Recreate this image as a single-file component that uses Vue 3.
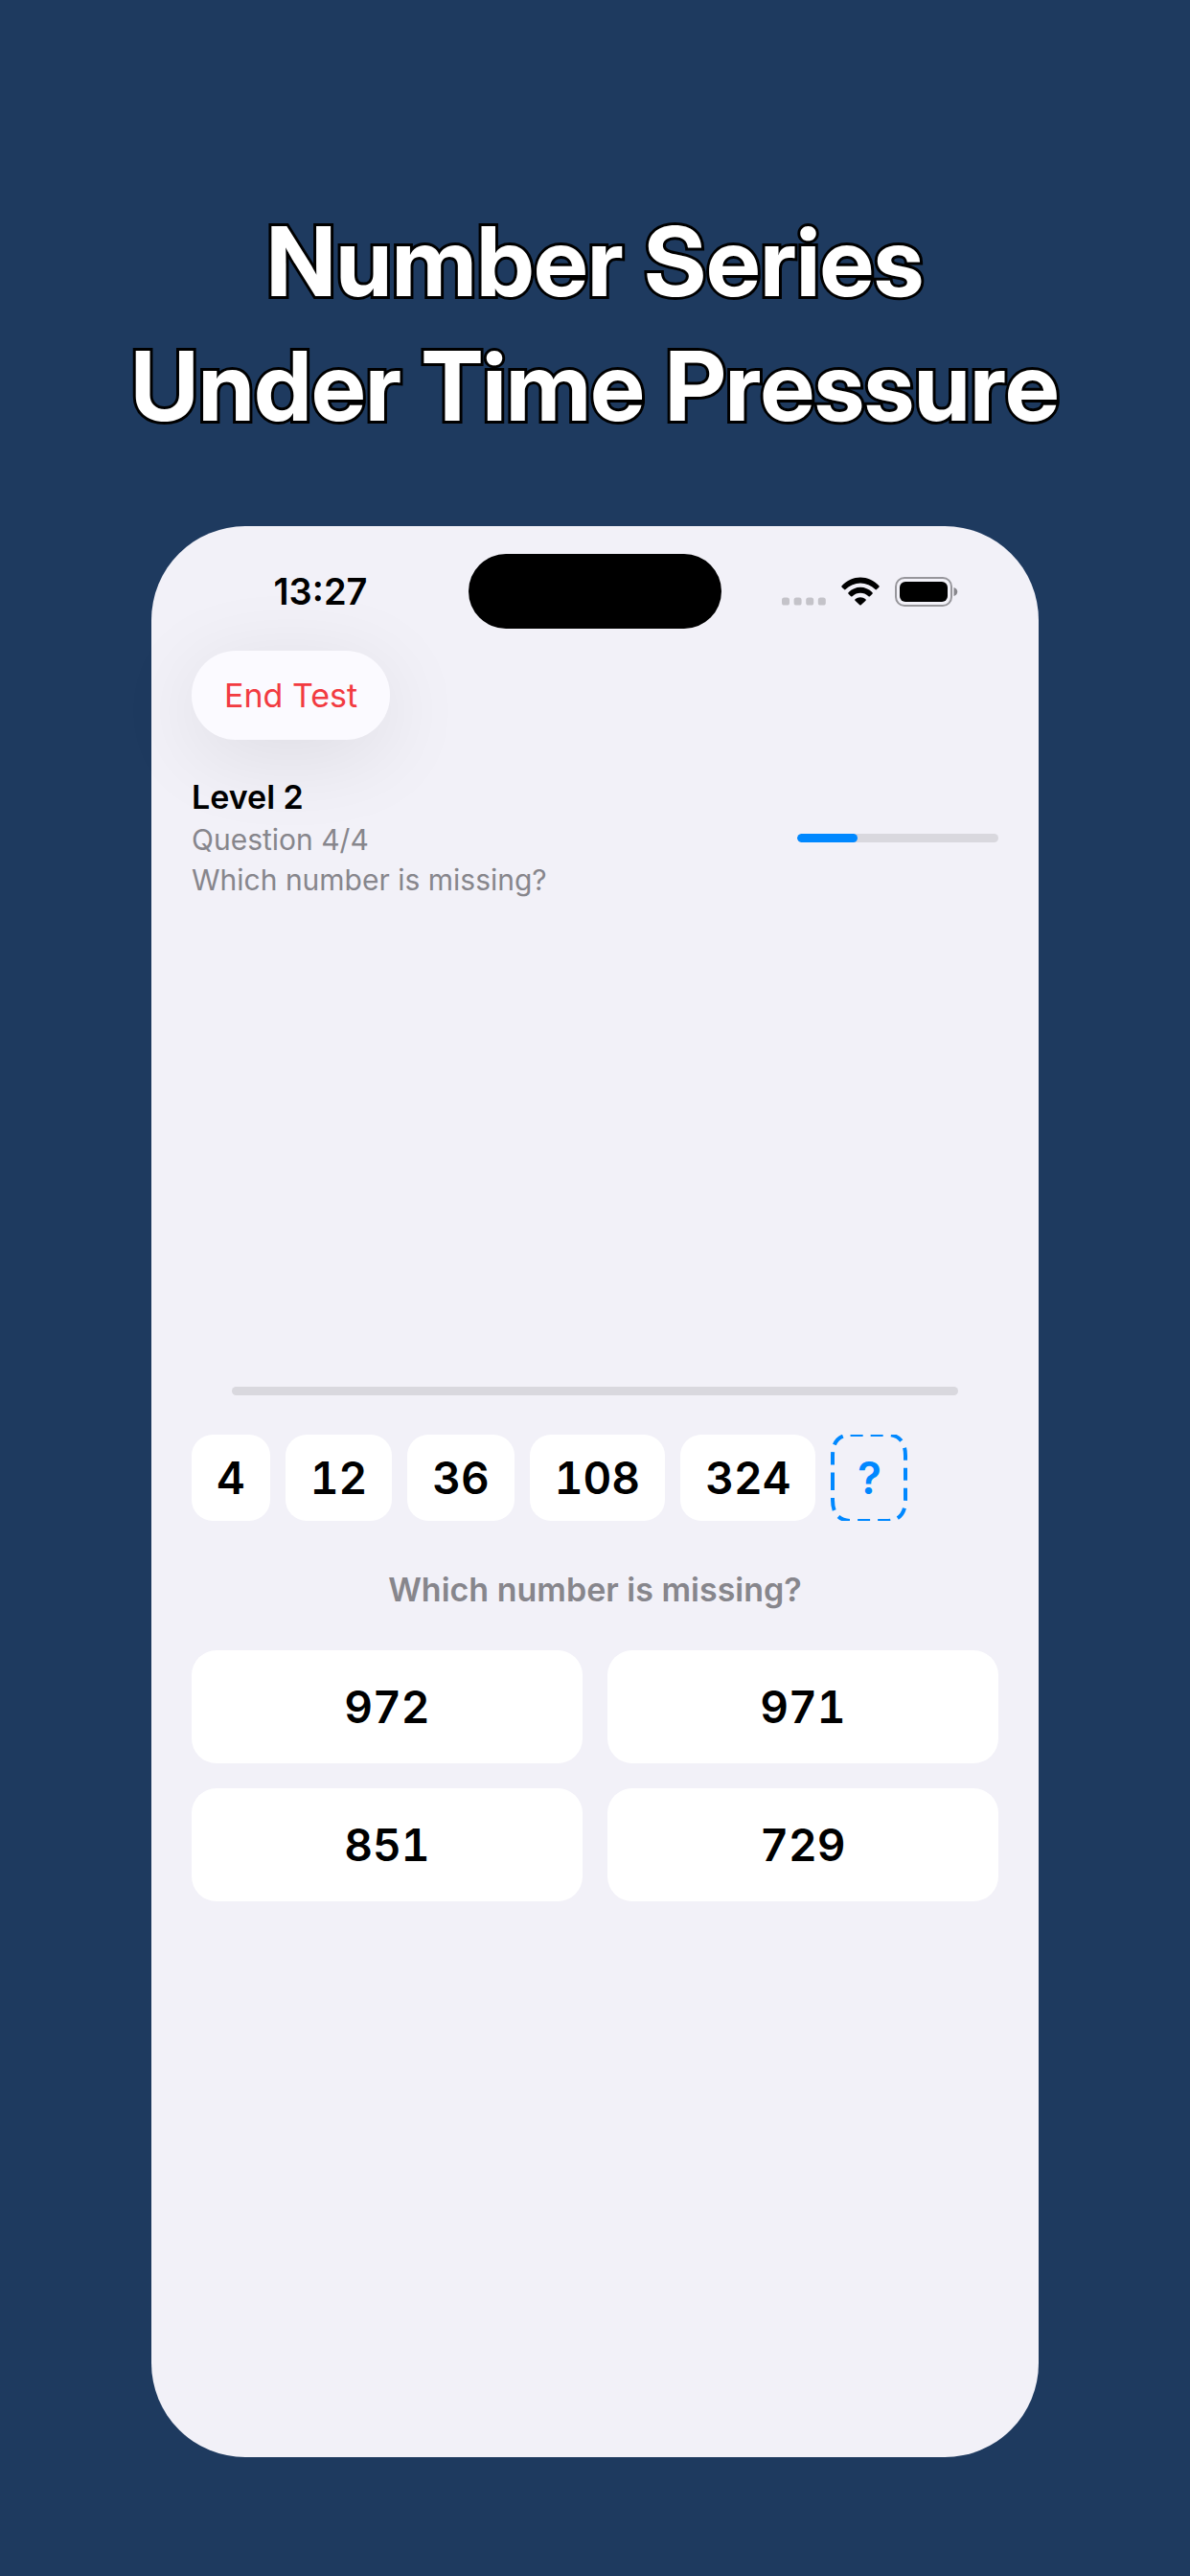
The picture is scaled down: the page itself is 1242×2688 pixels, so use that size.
<script setup>
import { ref } from 'vue'

// 当前题目数据
const level = ref(2)
const question = ref(4)
const total = ref(4)
const series = ref(['4', '12', '36', '108', '324'])
const answers = ref(['972', '971', '851', '729'])
const prompt = 'Which number is missing?'
</script>

<template>
    <div class="page">
        <h1 class="headline">Number Series<br>Under Time Pressure</h1>

        <main class="phone">
            <!-- 状态栏 -->
            <header class="status">
                <div class="time">13:27</div>
                <div class="island"></div>
                <div class="icons">
                    <svg class="dots" viewBox="0 0 46 30" width="46" height="30">
                        <rect v-for="i in 4" :key="i" :x="(i - 1) * 12.6" y="21.5" width="8" height="8" rx="2.6" />
                    </svg>
                    <svg class="wifi" viewBox="0 0 40 30" width="40" height="30">
                        <path d="M0.6 9.3 C11 -2.4 29 -2.4 39.4 9.3 Q40 10 39.4 10.7 L36.9 13.1 Q36.2 13.7 35.5 13 C27 4.3 13 4.3 4.5 13 Q3.8 13.7 3.1 13.1 L0.6 10.7 Q0 10 0.6 9.3 Z" />
                        <path d="M7.5 16.3 C14.5 8.9 25.5 8.9 32.5 16.3 Q33.1 17 32.5 17.7 L29.9 20.2 Q29.2 20.8 28.5 20.2 C23.5 15.6 16.5 15.6 11.5 20.2 Q10.8 20.8 10.1 20.2 L7.5 17.7 Q6.9 17 7.5 16.3 Z" />
                        <path d="M14.5 23.3 C17.7 20.5 22.3 20.5 25.5 23.3 Q26.2 24 25.5 24.7 L20.7 29.3 Q20 29.9 19.3 29.3 L14.5 24.7 Q13.8 24 14.5 23.3 Z" />
                    </svg>
                    <svg class="battery" viewBox="0 0 66 31" width="66" height="31">
                        <rect class="case" x="1" y="1" width="58" height="29" rx="9" />
                        <rect x="5" y="5" width="50" height="21" rx="6" />
                        <path class="tip" d="M61.5 11 C66.5 12.5 66.5 18.5 61.5 20 Z" />
                    </svg>
                </div>
            </header>

            <section class="content">
                <button type="button" class="end">End Test</button>

                <div class="info">
                    <div>
                        <h2 class="level">Level {{ level }}</h2>
                        <p class="sub">Question {{ question }}/{{ total }}</p>
                        <p class="sub">{{ prompt }}</p>
                    </div>
                    <progress class="bar small" value="30" max="100" aria-label="Progress"></progress>
                </div>

                <progress class="bar timer" value="0" max="100" aria-label="Time"></progress>

                <!-- 数列 -->
                <div class="series">
                    <span v-for="num in series" :key="num" class="chip">{{ num }}</span>
                    <span class="chip missing">
                        ?
                        <svg class="dash" viewBox="0 0 80 90" width="80" height="90">
                            <path d="M2 45 V68 Q2 90 22 90 H58 Q78 90 78 68 V22 Q78 0 58 0 H22 Q2 0 2 22 V45" />
                        </svg>
                    </span>
                </div>

                <p class="prompt">{{ prompt }}</p>

                <!-- 选项 -->
                <div class="answers">
                    <button v-for="a in answers" :key="a" type="button" class="answer">{{ a }}</button>
                </div>
            </section>
        </main>
    </div>
</template>

<style>
body {
    margin: 0;
    background: #1e3a5f;
}
</style>

<style scoped>
.page {
    box-sizing: border-box;
    min-height: 100vh;
    display: flex;
    flex-direction: column;
    padding: 208px 158px 124px;
    background: #1e3a5f;
    font-family: Inter, "Liberation Sans", sans-serif;
    color: #000;
}

h1,
h2,
p {
    margin: 0;
}

button {
    border: 0;
    font-family: inherit;
    cursor: pointer;
}

.headline {
    margin: 0 -100px 81px;
    font-family: "Inter Display", Inter, "Liberation Sans", sans-serif;
    font-size: 100px;
    line-height: 130px;
    font-weight: 700;
    text-align: center;
    color: #fff;
    -webkit-text-stroke: 6px #000;
    paint-order: stroke fill;
}

.phone {
    flex: 1;
    border-radius: 98px;
    background: #f2f1f8;
}

.status {
    display: grid;
    grid-template-columns: 1fr 264px 1fr;
    align-items: center;
    padding-top: 29px;
}

.time {
    padding-left: 22px;
    text-align: center;
    font-size: 38px;
    line-height: 44px;
    font-weight: 600;
}

.island {
    height: 78px;
    border-radius: 39px;
    background: #000;
}

.icons {
    display: flex;
    justify-content: center;
    align-items: center;
    gap: 16px;
    padding-right: 22px;
}

.dots {
    fill: #c4c3c9;
}

.case {
    fill: none;
    stroke: #97969b;
    stroke-width: 2;
}

.tip {
    fill: #88878c;
}

.content {
    padding: 23px 42px 0;
}

.end {
    display: block;
    height: 93px;
    padding: 0 34px;
    border-radius: 46px;
    background: #fbfaff;
    box-shadow: 0 16px 90px rgba(0, 0, 0, 0.09);
    color: #f23b41;
    font-size: 34px;
    line-height: 44px;
}

.info {
    display: flex;
    justify-content: space-between;
    align-items: center;
    margin-top: 37px;
}

.level {
    font-size: 34px;
    line-height: 46px;
    font-weight: 600;
}

.sub {
    font-size: 30px;
    line-height: 42px;
    color: #87868c;
}

.bar {
    appearance: none;
    display: block;
    height: 9px;
    border: 0;
    border-radius: 5px;
    background: #d9d8de;
    overflow: hidden;
}

.bar::-webkit-progress-bar {
    background: #d9d8de;
}

.bar::-webkit-progress-value {
    border-radius: 5px;
    background: #0088ff;
}

.small {
    width: 210px;
}

.timer {
    width: calc(100% - 84px);
    margin: 508px 42px 0;
}

.series {
    display: flex;
    gap: 16px;
    margin-top: 41px;
}

.chip {
    position: relative;
    box-sizing: border-box;
    min-width: 80px;
    height: 90px;
    padding: 0 26px;
    border-radius: 22px;
    background: #fff;
    text-align: center;
    font-size: 46px;
    line-height: 90px;
    font-weight: 600;
    font-variant-numeric: tabular-nums;
}

.missing {
    padding: 0;
    background: none;
    color: #0088ff;
}

.dash {
    position: absolute;
    inset: 0;
    fill: none;
    stroke: #0088ff;
    stroke-width: 4;
    stroke-dasharray: 13 8;
}

.prompt {
    margin-top: 50px;
    text-align: center;
    font-size: 34px;
    line-height: 44px;
    font-weight: 600;
    color: #87868c;
}

.answers {
    display: grid;
    grid-template-columns: 1fr 1fr;
    gap: 26px;
    margin-top: 41px;
}

.answer {
    height: 118px;
    border-radius: 26px;
    background: #fff;
    color: #000;
    font-size: 46px;
    font-weight: 600;
    font-variant-numeric: tabular-nums;
}
</style>
